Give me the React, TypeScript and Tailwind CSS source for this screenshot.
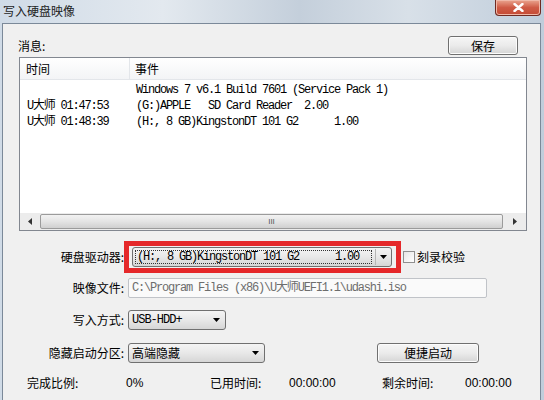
const cjk = { fontFamily: "'Noto Sans CJK SC', sans-serif" }
const mono = { fontFamily: "'Liberation Mono', 'Noto Sans CJK SC', monospace" }
const sans = { fontFamily: "'Liberation Sans', 'Noto Sans CJK SC', sans-serif" }

function Arrow({ className = '' }: { className?: string }) {
  return (
    <svg width="7" height="4" viewBox="0 0 7 4" className={className}>
      <path d="M0 0h7L3.5 4z" fill="#000" />
    </svg>
  )
}

function Combo({ width, text, textStyle }: { width: string; text: string; textStyle?: React.CSSProperties }) {
  return (
    <div
      className={`${width} h-[20px] flex items-center border border-[#707070] rounded-[3px] bg-gradient-to-b from-[#f4f4f4] via-[#e8e8e8] to-[#d6d6d6]`}
    >
      <span className="pl-[3px] flex-1 text-[12px] leading-none whitespace-pre text-black" style={textStyle}>
        {text}
      </span>
      <Arrow className="mr-[5px]" />
    </div>
  )
}

function Button({ width, label }: { width: string; label: string }) {
  return (
    <div
      className={`${width} h-[19px] flex items-center justify-center border border-[#707070] rounded-[3px] bg-gradient-to-b from-[#f6f6f6] via-[#ebebeb] to-[#d5d5d5] text-[12px] leading-none shadow-[inset_0_0_0_1px_#fcfcfc]`}
      style={cjk}
    >
      {label}
    </div>
  )
}

const rows = [
  { time: '', event: 'Windows 7 v6.1 Build 7601 (Service Pack 1)' },
  { time: 'U大师 01:47:53', event: '(G:)APPLE   SD Card Reader  2.00' },
  { time: 'U大师 01:48:39', event: '(H:, 8 GB)KingstonDT 101 G2      1.00' },
]

export default function App() {
  return (
    <div className="w-[544px] h-[400px] overflow-hidden flex flex-col bg-[linear-gradient(90deg,#d0dbe7_0%,#e3e9ef_30%,#c4cfdb_55%,#d8e0e8_75%,#c0cddb_100%)]">
      {/* Title bar */}
      <div className="h-[23px] flex items-start shrink-0">
        <span className="pl-[3px] pt-[3px] text-[12px] leading-[16px] text-[#1e1e1e]" style={cjk}>
          写入硬盘映像
        </span>
        <div className="ml-auto mr-[3px] w-[46px] h-[16px] flex items-center justify-center rounded-b-[4px] border border-t-0 border-[#6f2a22] bg-gradient-to-b from-[#e9a590] via-[#cf5b46] to-[#c44a34] shadow-[inset_0_0_0_1px_#f0b8a8]">
          <svg width="11" height="9" viewBox="0 0 11 9">
            <path d="M1.5 1l8 7M9.5 1l-8 7" stroke="#fff" strokeWidth="2.4" strokeLinecap="round" />
          </svg>
        </div>
      </div>

      {/* Client area */}
      <div className="flex-1 ml-[2px] mr-[3px] border border-b-0 border-[#7b8999] bg-[#f0f0f0] flex flex-col">
        <div className="mt-[12px] h-[19px] flex items-center pl-[15px] pr-[22px]">
          <span className="text-[12px] leading-none mt-[1px]" style={cjk}>
            消息:
          </span>
          <div className="ml-auto">
            <Button width="w-[70px]" label="保存" />
          </div>
        </div>

        {/* List view */}
        <div className="mt-[2px] ml-[16px] w-[508px] h-[174px] border border-[#828790] bg-white flex flex-col">
          <div className="h-[22px] flex items-center border-b border-[#e3e6ea] bg-gradient-to-b from-white to-[#f3f4f6] text-[12px] leading-none" style={cjk}>
            <span className="w-[110px] pl-[6px] h-full flex items-center border-r border-[#e3e6ea]">时间</span>
            <span className="pl-[5px]">事件</span>
          </div>
          <div className="mt-[2px] flex-1">
            {rows.map((r, i) => (
              <div key={i} className="h-[16px] flex items-center text-[12px] leading-none tracking-[-1.2px] whitespace-pre" style={mono}>
                <span className="w-[110px] pl-[7px]">{r.time}</span>
                <span className="pl-[6px]">{r.event}</span>
              </div>
            ))}
          </div>
          {/* Horizontal scrollbar */}
          <div className="h-[17px] flex items-center bg-[#ececec]">
            <div className="w-[20px] h-full flex items-center justify-center">
              <svg width="4" height="7" viewBox="0 0 4 7">
                <path d="M4 0v7L0 3.5z" fill="#333" />
              </svg>
            </div>
            <div className="flex-1 h-[15px] flex items-center justify-center rounded-[2px] border border-[#9b9b9b] bg-gradient-to-b from-[#f2f2f2] via-[#e4e4e4] to-[#d0d0d0]">
              <span className="text-[8px] leading-none text-[#555]" style={sans}>
                III
              </span>
            </div>
            <div className="w-[23px] h-full flex items-center justify-center">
              <svg width="4" height="7" viewBox="0 0 4 7">
                <path d="M0 0v7l4-3.5z" fill="#333" />
              </svg>
            </div>
          </div>
        </div>

        {/* Form */}
        <div className="mt-[10px] flex items-center">
          <span className="w-[121px] text-right text-[12px] leading-none" style={cjk}>
            硬盘驱动器:
          </span>
          <div className="border-[5px] border-[#e5282a] pl-[3px] pr-[4px] py-[1px]">
            <div className="w-[260px] h-[20px] flex items-center border border-[#707070] rounded-[3px] bg-gradient-to-b from-[#f4f4f4] via-[#e8e8e8] to-[#d6d6d6]">
              <div className="ml-[2px] w-[237px] h-[14px] flex items-center border border-dotted border-[#333] text-[12px] leading-none tracking-[-1.2px] whitespace-pre" style={mono}>
                <span className="pl-[1px]">{'(H:, 8 GB)KingstonDT 101 G2      1.00'}</span>
              </div>
              <div className="ml-[3px] h-[16px] w-[15px] flex items-center justify-center border-l border-[#b5b5b5]">
                <Arrow />
              </div>
            </div>
          </div>
          <div className="ml-[2px] w-[12px] h-[12px] border border-[#8f8f8f] bg-gradient-to-br from-[#e6e6e6] to-white" />
          <span className="ml-[2px] text-[12px] leading-none" style={cjk}>
            刻录校验
          </span>
        </div>

        <div className="mt-[5px] flex items-center">
          <span className="w-[121px] text-right text-[12px] leading-none" style={cjk}>
            映像文件:
          </span>
          <div className="ml-[4px] w-[359px] h-[20px] flex items-center border border-[#c0c3c8] rounded-[2px] bg-[#fafafa]">
            <span className="pl-[3px] text-[12px] leading-none tracking-[-1.2px] whitespace-pre text-[#6d6d6d]" style={mono}>
              {'C:\\Program Files (x86)\\U大师UEFI1.1\\udashi.iso'}
            </span>
          </div>
        </div>

        <div className="mt-[12px] flex items-center">
          <span className="w-[121px] text-right text-[12px] leading-none" style={cjk}>
            写入方式:
          </span>
          <div className="ml-[4px]">
            <Combo width="w-[98px]" text="USB-HDD+" textStyle={{ ...mono, letterSpacing: '-1px' }} />
          </div>
        </div>

        <div className="mt-[13px] flex items-center">
          <span className="w-[121px] text-right text-[12px] leading-none" style={cjk}>
            隐藏启动分区:
          </span>
          <div className="ml-[4px]">
            <Combo width="w-[137px]" text="高端隐藏" textStyle={cjk} />
          </div>
          <div className="ml-[112px]">
            <Button width="w-[102px] h-[20px]" label="便捷启动" />
          </div>
        </div>

        <div className="mt-[10px] h-[20px] flex items-center pl-[24px] text-[12px] leading-none">
          <span className="w-[99px]" style={cjk}>完成比例:</span>
          <span className="w-[84px]" style={sans}>0%</span>
          <span className="w-[79px]" style={cjk}>已用时间:</span>
          <span className="w-[93px]" style={sans}>00:00:00</span>
          <span className="w-[83px]" style={cjk}>剩余时间:</span>
          <span style={sans}>00:00:00</span>
        </div>
      </div>
    </div>
  )
}
